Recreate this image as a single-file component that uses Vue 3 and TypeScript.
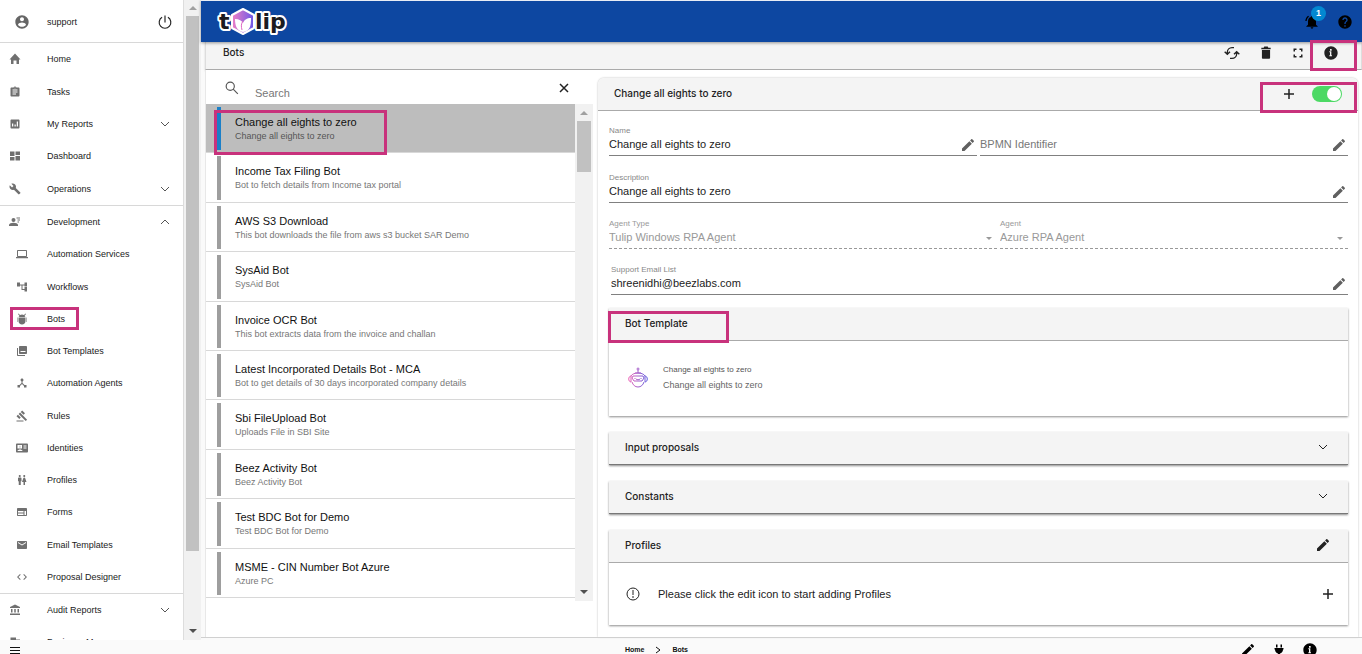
<script setup lang="ts">
import { ref } from 'vue'

interface Entry {
  label: string
  icon: string
  arrow?: 'down' | 'up'
  marked?: boolean
}

const circle = 'M12 2C6.48 2 2 6.48 2 12s4.48 10 10 10 10-4.48 10-10S17.52 2 12 2z'

const icons: Record<string, string> = {
  account: circle + 'm0 3c1.66 0 3 1.34 3 3s-1.34 3-3 3-3-1.34-3-3 1.34-3 3-3zm0 14.2c-2.5 0-4.71-1.28-6-3.22.03-1.99 4-3.08 6-3.08 1.99 0 5.97 1.09 6 3.08-1.29 1.94-3.5 3.22-6 3.22z',
  home: 'M9 22v-7h6v7h5v-9h3L12 1 1 13h3v9z',
  tasks: 'M19 3h-4.18C14.4 1.84 13.3 1 12 1c-1.3 0-2.4.84-2.82 2H5c-1.1 0-2 .9-2 2v14c0 1.1.9 2 2 2h14c1.1 0 2-.9 2-2V5c0-1.1-.9-2-2-2zm-7 0c.55 0 1 .45 1 1s-.45 1-1 1-1-.45-1-1 .45-1 1-1zm2 14H7v-2h7v2zm3-4H7v-2h10v2zm0-4H7V7h10v2z',
  reports: 'M19 3H5c-1.1 0-2 .9-2 2v14c0 1.1.9 2 2 2h14c1.1 0 2-.9 2-2V5c0-1.1-.9-2-2-2zM8.500 17H6v-6h2.500v6zm5 0H11v-4h2.500v4zm4.500 0h-2.500V7H18v10z',
  dashboard: 'M2 12h9V3H2v9zm0 9h9v-7H2v7zm11 0h9v-9h-9v9zm0-18v7h9V3h-9z',
  build: 'M22.700 19l-9.100-9.100c.9-2.300.4-5-1.500-6.900-2-2-5-2.400-7.400-1.300L9 6 6 9 1.600 4.700C.4 7.100.9 10.100 2.900 12.100c1.900 1.900 4.600 2.400 6.900 1.500l9.100 9.100c.4.4 1 .4 1.400 0l2.300-2.300c.5-.4.5-1.100.1-1.400z',
  development: 'M9 4a4 4 0 1 0 0 8 4 4 0 0 0 0-8zM0 20v-2c0-3 5-4.500 9-4.500s9 1.500 9 4.500v2zM15 3h7v2h-7zM17 7h5v2h-5zM17 11h3v2h-3z',
  laptop: 'M20 18c1.100 0 2-.9 2-2V6c0-1.100-.9-2-2-2H4c-1.100 0-2 .9-2 2v10c0 1.100.9 2 2 2H0v2.500h24V18h-4zM4 6h16v10H4V6z',
  workflow: 'M22 3h-5v4H8V3H2v8h6V9h3v9h6v3h5v-9h-5v4h-4V9h4v2h5z',
  bug: 'M5 9h14v7c0 4-3 7-7 7s-7-3-7-7zM5 1l3 3a8 8 0 0 1 8 0l3-3 1 1-3 4 2 2H5l2-2-3-4zM3 9h1v9H3zM20 9h1v9h-1z',
  library: 'M22 16V4c0-1.100-.9-2-2-2H8c-1.100 0-2 .9-2 2v12c0 1.100.9 2 2 2h12c1.100 0 2-.9 2-2zM9 12h10v2H9zM2 6v14c0 1.100.9 2 2 2h14v-2H4V6H2z',
  hub: 'M17 16l-4-4V8.820C14.160 8.400 15 7.300 15 6c0-1.660-1.340-3-3-3S9 4.340 9 6c0 1.300.84 2.400 2 2.820V12l-4 4H3v5h5v-3.050l4-4.200 4 4.200V21h5v-5h-4z',
  gavel: 'M1 21h14v2H1zM5.245 8.070l2.830-2.827 14.140 14.142-2.828 2.828zM12.317 1l5.657 5.656-2.830 2.830-5.654-5.660zM3.825 9.485l5.657 5.657-2.828 2.828-5.657-5.657z',
  identity: 'M22 3H2C.9 3 0 4 0 5v14c0 1 .9 2 2 2h20c1 0 2-1 2-2V5c0-1-1-2-2-2zM3 6h9v7H3zM15 7h6v2h-6zM15 11h6v2h-6zM3 18c0-2 3-3 5-3s5 1 5 3zM7.500 7.500v4h1v-4z',
  people: 'M5.500 22v-7.500H4V9c0-1.100.9-2 2-2h3c1.100 0 2 .9 2 2v5.500H9.500V22h-4zM18 22v-6h3l-2.540-7.630C18.180 7.550 17.420 7 16.560 7h-.12c-.86 0-1.630.55-1.900 1.370L12 16h3v6h3zM7.500 6c1.110 0 2-.89 2-2s-.89-2-2-2-2 .89-2 2 .89 2 2 2zm9 0c1.110 0 2-.89 2-2s-.89-2-2-2-2 .89-2 2 .89 2 2 2z',
  form: 'M20 4H4c-1.100 0-2 .9-2 2v12c0 1.100.9 2 2 2h16c1.100 0 2-.9 2-2V6c0-1.100-.9-2-2-2zm-5 14H4v-3h11v3zm0-5H4v-3h11v3zm5 5h-3v-8h3v8z',
  mail: 'M20 4H4c-1.100 0-2 .9-2 2v12c0 1.100.9 2 2 2h16c1.100 0 2-.9 2-2V6c0-1.100-.9-2-2-2zm0 4l-8 5-8-5V6l8 5 8-5v2z',
  code: 'M9.400 16.600L4.800 12l4.600-4.600L8 6l-6 6 6 6 1.400-1.400zm5.200 0l4.600-4.600-4.600-4.600L16 6l6 6-6 6-1.400-1.400z',
  bank: 'M4 10v7h3v-7H4zm6.500 0v7h3v-7h-3zM2 22h20v-3H2v3zm15-12v7h3v-7h-3zM12 1L2 6v2h20V6L12 1z',
  business: 'M3 3h11v4h8v14H3z',
  edit: 'M3 17.250V21h3.750L17.810 9.940l-3.750-3.750L3 17.250zM20.710 7.040c.39-.39.39-1.020 0-1.410l-2.340-2.340c-.39-.39-1.020-.39-1.410 0l-1.830 1.830 3.750 3.750 1.830-1.830z',
  info: circle + 'm1.500 15h-4v-1.500h1V11h-1V9.500h3v6h1V17zm-.5-8.500h-2.500V6H13v2.500z',
  help: circle + 'm1 17h-2v-2h2v2zm2.070-7.750l-.9.92C13.450 12.900 13 13.500 13 15h-2v-.5c0-1.100.45-2.100 1.170-2.830l1.240-1.260c.37-.36.59-.86.59-1.410 0-1.100-.9-2-2-2s-2 .9-2 2H8c0-2.210 1.790-4 4-4s4 1.790 4 4c0 .88-.36 1.680-.93 2.250z',
  trash: 'M5 20c0 1.100.9 2 2 2h10c1.100 0 2-.9 2-2V7H5v13zM20 3h-4l-1-2H9L8 3H4v2.500h16V3z',
  fullscreen: 'M6 15H3v6h6v-3H6v-3zM3 9h3V6h3V3H3v6zm15 9h-3v3h6v-6h-3v3zM15 3v3h3v3h3V3h-6z',
  bell: 'M12 22c1.100 0 2-.9 2-2h-4c0 1.100.9 2 2 2zm6-6v-5c0-3.070-1.630-5.640-4.500-6.320V4a1.500 1.500 0 0 0-3 0v.68C7.640 5.360 6 7.920 6 11v5l-2.500 2.500V19h17v-.5L18 16zM7.600 4.100L6.200 2.700C3.800 4.500 2.200 7.300 2 10.500h2c.2-2.600 1.500-4.900 3.600-6.400z',
  plug: 'M6 1h3v6H6zM15 1h3v6h-3zM3 8h18v3h-1c0 4-2.500 7-6 8v4h-4v-4c-3.500-1-6-4-6-8H3z',
}

const mainMenu: Entry[] = [
  { label: 'Home', icon: 'home' },
  { label: 'Tasks', icon: 'tasks' },
  { label: 'My Reports', icon: 'reports', arrow: 'down' },
  { label: 'Dashboard', icon: 'dashboard' },
  { label: 'Operations', icon: 'build', arrow: 'down' },
]
const devMenu: Entry[] = [
  { label: 'Development', icon: 'development', arrow: 'up' },
  { label: 'Automation Services', icon: 'laptop' },
  { label: 'Workflows', icon: 'workflow' },
  { label: 'Bots', icon: 'bug', marked: true },
  { label: 'Bot Templates', icon: 'library' },
  { label: 'Automation Agents', icon: 'hub' },
  { label: 'Rules', icon: 'gavel' },
  { label: 'Identities', icon: 'identity' },
  { label: 'Profiles', icon: 'people' },
  { label: 'Forms', icon: 'form' },
  { label: 'Email Templates', icon: 'mail' },
  { label: 'Proposal Designer', icon: 'code' },
]
const auditMenu: Entry[] = [
  { label: 'Audit Reports', icon: 'bank', arrow: 'down' },
  { label: 'Business Manager', icon: 'business' },
]
const groups = [
  { name: 'main', items: mainMenu },
  { name: 'dev', items: devMenu },
  { name: 'audit', items: auditMenu },
]

const bots = [
  ['Change all eights to zero', 'Change all eights to zero'],
  ['Income Tax Filing Bot', 'Bot to fetch details from Income tax portal'],
  ['AWS S3 Download', 'This bot downloads the file from aws s3 bucket SAR Demo'],
  ['SysAid Bot', 'SysAid Bot'],
  ['Invoice OCR Bot', 'This bot extracts data from the invoice and challan'],
  ['Latest Incorporated Details Bot - MCA', 'Bot to get details of 30 days incorporated company details'],
  ['Sbi FileUpload Bot', 'Uploads File in SBI Site'],
  ['Beez Activity Bot', 'Beez Activity Bot'],
  ['Test BDC Bot for Demo', 'Test BDC Bot for Demo'],
  ['MSME - CIN Number Bot Azure', 'Azure PC'],
]

const selected = ref(0)
const search = ref('')
const enabled = ref(true)
const name = ref('Change all eights to zero')
const identifier = ref('')
const description = ref('Change all eights to zero')
const email = ref('shreenidhi@beezlabs.com')
</script>

<template>
  <div class="page">
    <div class="body">
      <aside class="side">
        <nav class="menu" aria-label="Main">
          <div class="user">
            <svg class="i16 uicon" viewBox="0 0 24 24"><path :d="icons.account" /></svg>
            <span class="ulabel">support</span>
            <button class="power" aria-label="Sign out">
              <svg class="i14" viewBox="0 0 24 24"><path class="line" d="M12 1v12M7 4a10 10 0 1 0 10 0" /></svg>
            </button>
          </div>
          <div v-for="g in groups" :key="g.name" class="group" :class="g.name">
            <a v-for="(m, i) in g.items" :key="m.label" href="#" class="entry" :class="{ sub: g.name === 'dev' && i > 0 }">
              <span class="eicon"><svg class="i12" viewBox="0 0 24 24"><path fill-rule="evenodd" :d="icons[m.icon]" /></svg></span>
              <span class="elabel">{{ m.label }}</span>
              <svg v-if="m.arrow" class="chev" viewBox="0 0 10 10"><path class="thin" :d="m.arrow === 'down' ? 'M1 3l4 4 4-4' : 'M1 7l4-4 4 4'" /></svg>
              <span v-if="m.marked" class="mark mark-menu"></span>
            </a>
          </div>
        </nav>
        <div class="bar side-bar"><i class="up"></i><b></b><i class="down"></i></div>
      </aside>

      <main class="main">
        <header class="top">
          <svg class="logo" viewBox="0 0 76 36" role="img" aria-label="tulip">
            <defs>
              <linearGradient id="petal" x1="0" y1="0" x2="1" y2="0">
                <stop offset="0" stop-color="#ee7fc5" /><stop offset="1" stop-color="#6a58e8" />
              </linearGradient>
            </defs>
            <g class="word">
              <text x="4" y="25">t</text>
              <text x="40" y="25">lip</text>
            </g>
            <path class="hex" d="M28 5l11 6v13l-11 6-11-6V11z" />
            <path class="petals" d="M20 15c4 0 7 2 8 4 1-3 4-5 8-5 0 8-1 13-8 14-6-1-8-6-8-13z" />
            <path class="vein" d="M27 26c-1-4-1-6 1-9" />
          </svg>
          <div class="top-icons">
            <button class="alert" aria-label="Notifications">
              <svg class="i16" viewBox="0 0 24 24"><path :d="icons.bell" /></svg>
              <span class="badge">1</span>
            </button>
            <button aria-label="Help"><svg class="i16" viewBox="0 0 24 24"><path :d="icons.help" /></svg></button>
          </div>
        </header>

        <div class="tools">
          <h1>Bots</h1>
          <div class="tool-icons">
            <button aria-label="Refresh"><svg class="i16" viewBox="0 0 24 24"><path class="line" d="M15 4h-3a7 7 0 0 0-7 7v3M1 10l4 4 4-4M9 20h3a7 7 0 0 0 7-7v-3M15 14l4-4 4 4" /></svg></button>
            <button aria-label="Delete"><svg class="i14" viewBox="0 0 24 24"><path :d="icons.trash" /></svg></button>
            <button aria-label="Full screen"><svg class="i12" viewBox="0 0 24 24"><path :d="icons.fullscreen" /></svg></button>
            <button class="about" aria-label="Information"><svg class="i16" viewBox="0 0 24 24"><path fill-rule="evenodd" :d="icons.info" /></svg><span class="mark mark-about"></span></button>
          </div>
        </div>

        <div class="content">
          <section class="list">
            <div class="search">
              <svg class="i14" viewBox="0 0 24 24"><circle class="glass" cx="9" cy="9" r="7" /><path class="glass" d="M14 14l8 8" /></svg>
              <input v-model="search" type="text" placeholder="Search" aria-label="Search">
              <button aria-label="Clear" @click="search = ''"><svg class="i10" viewBox="0 0 10 10"><path class="cross" d="M1 1l8 8M9 1l-8 8" /></svg></button>
            </div>
            <div class="scroll">
              <div class="rows">
                <button v-for="(b, i) in bots" :key="b[0]" class="row" :class="{ on: selected === i }" @click="selected = i">
                  <span class="stripe"></span>
                  <span class="row-text"><strong>{{ b[0] }}</strong><small>{{ b[1] }}</small></span>
                  <span v-if="i === 0" class="mark mark-row"></span>
                </button>
              </div>
              <div class="bar list-bar"><i class="up"></i><b></b><i class="down"></i></div>
            </div>
          </section>

          <section class="detail">
            <div class="head detail-head">
              <h2>Change all eights to zero</h2>
              <div class="switch-box">
                <button aria-label="Add"><svg class="i10" viewBox="0 0 10 10"><path class="cross" d="M5 0v10M0 5h10" /></svg></button>
                <input v-model="enabled" class="switch" type="checkbox" aria-label="Enabled">
                <span class="mark mark-switch"></span>
              </div>
            </div>

            <form class="form" @submit.prevent>
              <div class="pair">
                <div class="field">
                  <label for="f-name">Name</label>
                  <div class="line-box"><input id="f-name" v-model="name" type="text"><svg class="i16" viewBox="0 0 24 24"><path :d="icons.edit" /></svg></div>
                </div>
                <div class="field bare">
                  <div class="line-box"><input v-model="identifier" type="text" placeholder="BPMN Identifier" aria-label="BPMN Identifier"><svg class="i16" viewBox="0 0 24 24"><path :d="icons.edit" /></svg></div>
                </div>
              </div>
              <div class="field">
                <label for="f-desc">Description</label>
                <div class="line-box"><input id="f-desc" v-model="description" type="text"><svg class="i16" viewBox="0 0 24 24"><path :d="icons.edit" /></svg></div>
              </div>
              <div class="pair agents">
                <div class="field off">
                  <label for="f-type">Agent Type</label>
                  <div class="line-box"><select id="f-type" disabled><option>Tulip Windows RPA Agent</option></select><i class="caret"></i></div>
                </div>
                <div class="field off">
                  <label for="f-agent">Agent</label>
                  <div class="line-box"><select id="f-agent" disabled><option>Azure RPA Agent</option></select><i class="caret"></i></div>
                </div>
              </div>
              <div class="field mail">
                <label for="f-mail">Support Email List</label>
                <div class="line-box"><input id="f-mail" v-model="email" type="email"><svg class="i16" viewBox="0 0 24 24"><path :d="icons.edit" /></svg></div>
              </div>
            </form>

            <div class="cards">
              <article class="card">
                <div class="head"><h3>Bot Template</h3><span class="mark mark-template"></span></div>
                <div class="template">
                  <svg class="robot" viewBox="0 0 20 22">
                    <defs><linearGradient id="bot" x1="0" y1="0" x2="20" y2="0" gradientUnits="userSpaceOnUse"><stop offset="0" stop-color="#f062b4" /><stop offset="1" stop-color="#5a5be0" /></linearGradient></defs>
                    <circle cx="10" cy="2" r="1" /><path d="M10 3v3M7 6h6M3 9c1-2 4-3 7-3s6 1 7 3M4 15c1 3 3 5 6 5s5-2 6-5M3 9c-3 0-3 6 0 6M17 9c3 0 3 6 0 6M3 9v6M17 9v6M5 9h10l1 2-2 3H6l-2-3zM7 11v1M13 11v1M8 12c1 1 3 1 4 0" />
                  </svg>
                  <div class="template-text"><small>Change all eights to zero</small><p>Change all eights to zero</p></div>
                </div>
              </article>
              <article class="card closed">
                <button class="head"><span>Input proposals</span><svg class="i10" viewBox="0 0 10 10"><path class="thin" d="M1 3l4 4 4-4" /></svg></button>
              </article>
              <article class="card closed">
                <button class="head"><span>Constants</span><svg class="i10" viewBox="0 0 10 10"><path class="thin" d="M1 3l4 4 4-4" /></svg></button>
              </article>
              <article class="card">
                <div class="head"><h3>Profiles</h3><button class="pen" aria-label="Edit profiles"><svg class="i16" viewBox="0 0 24 24"><path :d="icons.edit" /></svg></button></div>
                <div class="profile">
                  <svg class="i14" viewBox="0 0 14 14"><circle class="ring" cx="7" cy="7" r="6" /><path class="ring" d="M7 3v5M7 9v2" /></svg>
                  <p>Please click the edit icon to start adding Profiles</p>
                  <button aria-label="Add profile"><svg class="i10" viewBox="0 0 10 10"><path class="cross" d="M5 0v10M0 5h10" /></svg></button>
                </div>
              </article>
            </div>
          </section>
        </div>
      </main>
    </div>

    <footer class="foot">
      <button class="burger" aria-label="Menu"><svg class="i10" viewBox="0 0 10 10"><path class="bars" d="M0 1.500h10M0 4.500h10M0 7.500h10" /></svg></button>
      <nav class="crumbs" aria-label="Breadcrumb"><a href="#">Home</a><svg viewBox="0 0 6 8"><path class="thin" d="M1 1l4 3-4 3" /></svg><a href="#">Bots</a></nav>
      <div class="foot-icons">
        <button aria-label="Edit"><svg class="i16" viewBox="0 0 24 24"><path :d="icons.edit" /></svg></button>
        <button aria-label="Connect"><svg class="i12" viewBox="0 0 24 24"><path :d="icons.plug" /></svg></button>
        <button aria-label="About"><svg class="i16" viewBox="0 0 24 24"><path fill-rule="evenodd" :d="icons.info" /></svg></button>
      </div>
    </footer>
  </div>
</template>

<style>
body { margin: 0; background: #fafafa; overflow: hidden; }
</style>

<style scoped>
* { box-sizing: border-box; }
.page { height: 100vh; display: flex; flex-direction: column; overflow: hidden; background: #fafafa; color: #222; font: 11px/14px "Liberation Sans", Arial, sans-serif; }
button, input, select { font: inherit; color: inherit; border: 0; padding: 0; margin: 0; background: none; outline: 0; border-radius: 0; }
button { cursor: pointer; text-align: left; }
button svg { display: block; }
svg { flex: none; fill: currentColor; }
a { color: inherit; text-decoration: none; }
h1, h2, h3, p { margin: 0; font-weight: 400; font-size: inherit; }
.i10 { width: 10px; height: 10px; }
.i12 { width: 12px; height: 12px; }
.i14 { width: 14px; height: 14px; }
.i16 { width: 16px; height: 16px; }
.line, .thin, .cross, .glass, .ring, .bars { fill: none; stroke: currentColor; }
.line, .glass { stroke-width: 2; }
.thin, .ring, .bars { stroke-width: 1; }
.cross { stroke-width: 1.5; }
.mark { position: absolute; border: 3px solid #c8327c; pointer-events: none; z-index: 3; }

.body { flex: 1; min-height: 0; display: flex; }
.side { flex: none; width: 201px; display: flex; background: #fff; margin-bottom: -3px; z-index: 1; }
.menu { flex: 1; overflow: hidden; border-right: 1px solid #ddd; font-size: 9px; }
.user { display: flex; align-items: center; height: 43px; border-bottom: 1px solid #d8d8d8; padding: 2px 11px 0 14px; }
.uicon { color: #666; }
.ulabel { flex: 1; padding-left: 17px; }
.group { display: flex; flex-direction: column; border-bottom: 1px solid #d8d8d8; }
.group.main { min-height: 163px; }
.group.dev { min-height: 388px; }
.group.audit { border: 0; }
.entry { flex: 1; min-height: 32px; display: flex; align-items: center; position: relative; padding-right: 13px; }
.eicon { width: 47px; padding-left: 9px; display: flex; color: #707070; }
.sub .eicon { padding-left: 16px; }
.elabel { flex: 1; }
.chev { width: 10px; height: 10px; color: #555; }
.mark-menu { left: 10px; top: 4px; width: 69px; height: 23px; }

.bar { display: flex; flex-direction: column; align-items: center; background: #f1f1f1; }
.bar b { background: #c1c1c1; }
.bar i { border: 4px solid transparent; }
.bar .up { border-top: 0; border-bottom-color: #a0a0a0; }
.bar .down { border-bottom: 0; border-top-color: #505050; margin-top: auto; }
.side-bar { width: 17px; padding: 6px 0 7px; }
.side-bar b { width: 13px; margin-top: 6px; flex: 0 1 535px; }
.list-bar { width: 18px; padding: 7px 0; margin-bottom: -3px; }
.list-bar b { width: 14px; height: 51px; margin-top: 6px; }

main.main { flex: 1; min-width: 0; display: flex; flex-direction: column; }
.top { height: 42px; flex: none; display: flex; align-items: center; justify-content: space-between; background: #0d47a1; padding: 0 9px 0 14px; z-index: 1; border-top: 1px solid #e8edf5; box-shadow: 0 1px 3px rgba(0, 0, 0, .4); }
.logo { width: 76px; height: 36px; }
.word { font: bold 22px "DejaVu Sans", sans-serif; fill: #1b1b1f; stroke: #fff; stroke-width: 4px; stroke-linejoin: round; paint-order: stroke; }
.hex { fill: url(#petal); stroke: #fff; stroke-width: 2; stroke-linejoin: round; }
.petals { fill: #fff; }
.vein { fill: none; stroke: #df66c3; stroke-width: 1; }
.top-icons { display: flex; gap: 17px; color: #000; }
.alert { position: relative; }
.badge { position: absolute; left: 7px; top: -8px; width: 15px; height: 15px; border-radius: 50%; background: #0288d1; color: #fff; font-size: 9px; line-height: 15px; font-weight: 700; text-align: center; }
.tools { flex: none; height: 28px; margin-left: 4px; display: flex; justify-content: space-between; align-items: center; background: #f4f4f4; border: 1px solid #ddd; border-top: 0; border-bottom: 1px solid #aaa; box-shadow: 0 1px 2px rgba(0, 0, 0, .15); padding: 0 22px 8px 17px; }
h1, h2, h3, .closed .head { font: 500 10px/14px Inter, sans-serif; color: #222; }
.tool-icons { display: flex; align-items: center; gap: 19px; padding-top: 2px; }
.tools .about { position: relative; }
.mark-about { left: -13px; top: -5px; width: 47px; height: 31px; }

.content { flex: 1; min-height: 0; display: flex; margin-left: 4px; background: #fff; border-left: 1px solid #e8e8e8; }
.list { flex: 0 0 387px; display: flex; flex-direction: column; }
.search { height: 34px; flex: none; display: flex; align-items: center; padding: 2px 24px 0 19px; color: #555; }
.search input { flex: 1; min-width: 0; padding: 9px 0 0 16px; }
.search input::placeholder, .field input::placeholder { color: #777; opacity: 1; }
.search button { color: #222; }
.scroll { display: flex; }
.rows { flex: 1; min-height: 494px; display: flex; flex-direction: column; }
.row { flex: 1; display: flex; position: relative; border-bottom: 1px solid #d8d8d8; padding: 3px 0 2px 11px; }
.stripe { width: 4px; background: #9e9e9e; align-self: stretch; }
.row-text { padding: 8px 0 0 14px; display: flex; flex-direction: column; }
.row strong { font-weight: 400; color: #111; }
.row small { font-size: 9px; line-height: 14px; color: #777; }
.row.on { background: #bdbdbd; }
.row.on .stripe { background: #1a7fc8; }
.row.on small { color: #555; }
.mark-row { left: 8px; top: 6px; width: 173px; height: 45px; }

.detail { flex: 1; min-width: 0; margin: 8px 4px 0 5px; border-radius: 6px 6px 0 0; box-shadow: 0 0 2px rgba(0, 0, 0, .3); }
.head { display: flex; align-items: center; justify-content: space-between; width: 100%; height: 33px; padding: 0 16px 2px; position: relative; background: #f4f4f4; border-bottom: 1px solid #aaa; }
.detail-head { padding-right: 16px; padding-bottom: 3px; border-radius: 6px 6px 0 0; }
.switch-box { position: relative; display: flex; align-items: center; gap: 18px; padding-top: 3px; }
.switch { appearance: none; width: 30px; height: 16px; border-radius: 8px; background: #4cd964; display: flex; justify-content: flex-end; padding: 1px; }
.switch::after { content: ""; width: 14px; height: 14px; border-radius: 50%; background: #fff; }
.switch:not(:checked) { background: #bbb; justify-content: flex-start; }
.mark-switch { right: -15px; top: -1px; width: 97px; height: 31px; }

.form { padding: 15px 10px 0 11px; display: flex; flex-direction: column; gap: 17px; }
.pair { display: grid; grid-template-columns: 1fr 1fr; gap: 3px; }
.agents { grid-template-columns: 388fr 348fr; margin: -1px 0; }
.field { display: flex; flex-direction: column; min-width: 0; }
.bare { justify-content: flex-end; }
.field label { height: 10px; font-size: 8px; line-height: 10px; color: #888; }
.line-box { display: flex; align-items: center; height: 20px; border-bottom: 1px solid #808080; }
.line-box input, .line-box select { flex: 1; min-width: 0; height: 14px; margin-bottom: 4px; }
.line-box select { appearance: none; opacity: 1; }
.line-box svg { color: #606060; margin: 0 1px 2px 0; }
.off label, .off select { color: #999; }
.off .line-box { border-bottom-style: dashed; border-color: #999; }
.caret { border: 3px solid transparent; border-top-color: #999; border-bottom: 0; margin-right: 5px; }
.mail { margin-left: 2px; }

.cards { padding: 13px 10px 12px 11px; display: flex; flex-direction: column; gap: 16px; }
.card { background: #fff; box-shadow: 0 1px 2px rgba(0, 0, 0, .45); }
.closed .head { border-color: #777; padding-right: 20px; }
.mark-template { left: -1px; top: 3px; width: 121px; height: 32px; }
.template { height: 75px; display: flex; align-items: center; padding: 0 19px 2px; }
.robot { width: 20px; height: 22px; fill: none; stroke: url(#bot); stroke-width: 1; }
.template-text { padding-left: 15px; color: #666; font-size: 9px; line-height: 16px; }
.template-text small { display: block; font-size: 8px; line-height: 15px; color: #555; }
.card .pen { margin-right: 1px; }
.profile { height: 62px; display: flex; align-items: center; padding: 0 15px 0 17px; }
.profile p { flex: 1; padding-left: 18px; }

.foot { flex: none; height: 17px; border-top: 1px solid #d0d0d0; display: flex; justify-content: space-between; align-items: flex-start; position: relative; color: #111; }
.burger { margin: 8px 0 0 10px; }
.crumbs { position: absolute; left: 625px; top: 5px; display: flex; align-items: center; gap: 11px; font-size: 7px; font-weight: 700; }
.crumbs svg { width: 6px; height: 8px; }
.foot-icons { display: flex; gap: 17px; align-items: center; padding: 4px 44px 0 0; color: #000; }
</style>
